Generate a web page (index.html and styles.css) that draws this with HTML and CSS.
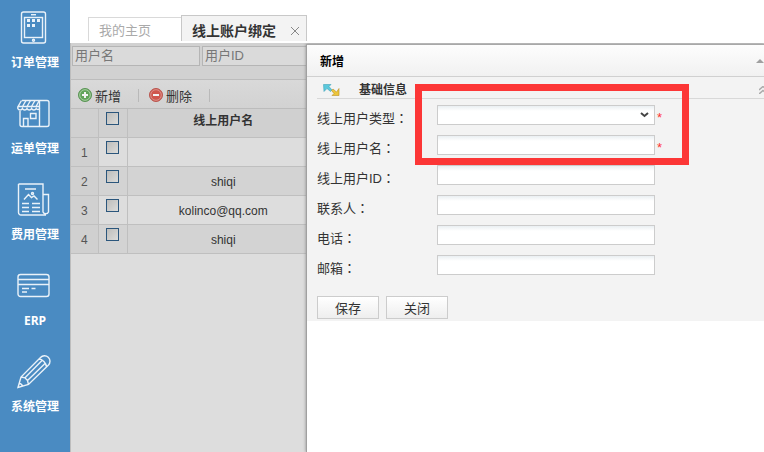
FILE: index.html
```
<!DOCTYPE html>
<html lang="zh-CN">
<head>
    <meta charset="UTF-8">
    <meta name="viewport" content="width=device-width, initial-scale=1.0">
    <title>线上账户绑定</title>
    <link rel="stylesheet" href="styles.css">
</head>
<body>
    <nav class="sidebar">
        <a class="nav-item" href="#">
            <svg viewBox="0 0 36 36" width="36" height="36">
                <rect x="4.5" y="2" width="24" height="31" rx="2"/>
                <rect x="7.5" y="7.5" width="18" height="20"/>
                <path d="M14 4.7h5"/>
                <circle cx="16.5" cy="30.3" r="1"/>
                <path class="solid" d="M10 9h3v3h-3zM15 9h3v3h-3zM20 9h3v3h-3zM10 14h3v3h-3zM15 14h3v3h-3z"/>
            </svg>
            <span>订单管理</span>
        </a>
        <a class="nav-item" href="#">
            <svg viewBox="0 0 36 36" width="36" height="36">
                <path d="M5 4.500h25a2 2 0 0 1 2 2v22a2 2 0 0 1-2 2H5a2 2 0 0 1-2-2V15M22.500 4.500v26"/>
                <path d="M4.500 4.500L.8 11v1.500a2.500 2.500 0 0 0 4.600 0a2.500 2.500 0 0 0 4.600 0a2.500 2.500 0 0 0 4.600 0a2.500 2.500 0 0 0 4.600 0a2 2 0 0 0 3.500 0M1 10.500h21M9 4.500l-3.500 6M13.500 4.500l-3.500 6M18 4.500l-3.500 6M22 5l-3 5.500"/>
                <path d="M6.500 30v-7.500h4.500v7.500M13.500 17.500h5.500v5h-5.500z"/>
            </svg>
            <span>运单管理</span>
        </a>
        <a class="nav-item" href="#">
            <svg viewBox="0 0 36 36" width="36" height="36">
                <path d="M1.500 2h24.500v28a3 3 0 0 0 5.500 0V12.500H26M29 33H4a2.500 2.500 0 0 1-2.500-2.500V2"/>
                <path d="M8 7h11M7 17.500l4.500-5 3 3 2.500-1.500 3.500 3.500M5 21.500h7M5 25.500h7M5 29.500h7M15 21.500h8M15 25.500h8M15 29.500h8"/>
                <circle cx="15.500" cy="11.500" r="1"/>
            </svg>
            <span>费用管理</span>
        </a>
        <a class="nav-item" href="#">
            <svg viewBox="0 0 36 36" width="36" height="36">
                <rect x="1" y="6.500" width="31" height="22" rx="2.500"/>
                <path d="M1 11.500h31M1 16.500h31M5 20.500h7M14.500 20.500h4M5 24h5"/>
            </svg>
            <span>ERP</span>
        </a>
        <a class="nav-item" href="#">
            <svg viewBox="0 0 36 36" width="36" height="36">
                <path d="M1 33.500L4 23 23.500 3.500a5.200 5.200 0 0 1 8 7.500L11.500 30.500zM4 23l4 .8 2.500 2.700 1 4M22 5c3 0 7.500 4 7.500 8M8 23.800L25 6.500M10.500 26.500L28 9.500M2.500 29.500c1.500 0 3 1.500 3 2.700"/>
            </svg>
            <span>系统管理</span>
        </a>
    </nav>

    <div class="main">
        <div class="tabs">
            <a class="tab" href="#">我的主页</a>
            <div class="tab active">
                <span>线上账户绑定</span>
                <button class="tab-close" type="button" aria-label="关闭标签">
                    <svg viewBox="0 0 10 10" width="10" height="10"><path d="M1 1l8 8M9 1L1 9"/></svg>
                </button>
            </div>
        </div>

        <div class="workspace">
            <form class="query">
                <input type="text" placeholder="用户名" aria-label="用户名">
                <input type="text" placeholder="用户ID" aria-label="用户ID">
            </form>

            <div class="toolbar">
                <button class="tool" type="button">
                    <svg viewBox="0 0 14 14" width="14" height="14">
                        <circle cx="7" cy="7" r="6.500" fill="#62a35a" stroke="#5a9455"/>
                        <circle cx="7" cy="7" r="5.300" fill="none" stroke="#a9cfa3"/>
                        <path d="M7 4v6M4 7h6" stroke="#f2f2f2" stroke-width="2"/>
                    </svg>
                    新增
                </button>
                <button class="tool" type="button">
                    <svg viewBox="0 0 14 14" width="14" height="14">
                        <circle cx="7" cy="7" r="6.500" fill="#cf574e" stroke="#b9564f"/>
                        <circle cx="7" cy="7" r="5.300" fill="none" stroke="#dc918a"/>
                        <path d="M4 7h6" stroke="#f2f2f2" stroke-width="2"/>
                    </svg>
                    删除
                </button>
            </div>

            <table class="grid">
                <thead>
                    <tr>
                        <th class="num"></th>
                        <th class="check"><input type="checkbox" aria-label="全选"></th>
                        <th>线上用户名</th>
                    </tr>
                </thead>
                <tbody>
                    <tr>
                        <td class="num">1</td>
                        <td class="check"><input type="checkbox" aria-label="选择第1行"></td>
                        <td></td>
                    </tr>
                    <tr>
                        <td class="num">2</td>
                        <td class="check"><input type="checkbox" aria-label="选择第2行"></td>
                        <td>shiqi</td>
                    </tr>
                    <tr>
                        <td class="num">3</td>
                        <td class="check"><input type="checkbox" aria-label="选择第3行"></td>
                        <td>kolinco@qq.com</td>
                    </tr>
                    <tr>
                        <td class="num">4</td>
                        <td class="check"><input type="checkbox" aria-label="选择第4行"></td>
                        <td>shiqi</td>
                    </tr>
                </tbody>
            </table>

            <!-- 新增面板，盖在列表上方 -->
            <section class="panel">
                <header class="panel-header">
                    <h2>新增</h2>
                    <button class="collapse" type="button" aria-label="收起">
                        <svg viewBox="0 0 8 4" width="8" height="4"><path d="M0 4L4 0l4 4z" fill="#a0a0a0"/></svg>
                    </button>
                </header>
                <form class="panel-form">
                    <div class="group-title">
                        <svg viewBox="0 0 17 12" width="17" height="12">
                            <path d="M.5.500h7.500L6 2.500l3 3.500-1.500 1.500L4 4.500 1 7.500z" fill="#5cc9dc" stroke="#3fa3b8" stroke-width=".6"/>
                            <path d="M16 11.500H9l2-2-2.500-3L10 5l3.500 3L16 4.500z" fill="#ecc53a" stroke="#b8912a" stroke-width=".6"/>
                        </svg>
                        <h3>基础信息</h3>
                        <button class="collapse" type="button" aria-label="收起基础信息">
                            <svg viewBox="0 0 5 8" width="5" height="8"><path d="M0 4l4-3.500 4 3.500M0 8l4-3.500L8 8" fill="none" stroke="#aaa" stroke-width="1.500"/></svg>
                        </button>
                    </div>
                    <div class="field">
                        <label for="userType">线上用户类型<span class="colon" lang="zh-TW">：</span></label>
                        <select id="userType" required></select>
                        <span class="required">*</span>
                    </div>
                    <div class="field">
                        <label for="userName">线上用户名<span class="colon" lang="zh-TW">：</span></label>
                        <input type="text" id="userName" required>
                        <span class="required">*</span>
                    </div>
                    <div class="field">
                        <label for="userId">线上用户ID<span class="colon" lang="zh-TW">：</span></label>
                        <input type="text" id="userId">
                    </div>
                    <div class="field">
                        <label for="contact">联系人<span class="colon" lang="zh-TW">：</span></label>
                        <input type="text" id="contact">
                    </div>
                    <div class="field">
                        <label for="phone">电话<span class="colon" lang="zh-TW">：</span></label>
                        <input type="text" id="phone">
                    </div>
                    <div class="field">
                        <label for="email">邮箱<span class="colon" lang="zh-TW">：</span></label>
                        <input type="text" id="email">
                    </div>
                    <div class="actions">
                        <button type="button">保存</button>
                        <button type="button">关闭</button>
                    </div>
                    <div class="highlight"></div>
                </form>
            </section>
        </div>
    </div>
</body>
</html>
```
FILE: styles.css
```
* {
    box-sizing: border-box;
}
body {
    display: flex;
    min-height: 100vh;
    margin: 0;
    background: #fff;
    color: #333;
    font-family: "Liberation Sans", "Noto Sans CJK SC", sans-serif;
    font-size: 13px;
}
button, input, select {
    margin: 0;
    font: inherit;
    color: inherit;
}
h2, h3 {
    margin: 0;
    font-size: 12px;
}

/* sidebar */
.sidebar {
    flex: 0 0 70px;
    background: #4a8bc2;
}
.nav-item {
    display: flex;
    flex-direction: column;
    align-items: center;
    gap: 8px;
    height: 86px;
    padding-top: 10px;
    color: #fff;
    font: bold 12px/18px "Open Sans", "Noto Sans CJK SC", sans-serif;
    text-decoration: none;
}
.nav-item svg {
    fill: none;
    stroke: #eaf2f9;
    stroke-width: 1.4;
}
.nav-item .solid {
    fill: #eaf2f9;
    stroke: none;
}

/* tabs */
.main {
    display: flex;
    flex: 1;
    flex-direction: column;
    min-width: 0;
}
.tabs {
    display: flex;
    align-items: flex-end;
    height: 43px;
    padding: 0 18px 2px;
}
.tab {
    width: 93px;
    height: 24px;
    padding-left: 10px;
    border: 1px solid #d9d9d9;
    border-width: 1px 0 0 1px;
    color: #aaa;
    line-height: 26px;
    text-decoration: none;
}
.tab.active {
    display: flex;
    align-items: center;
    justify-content: space-between;
    width: 126px;
    height: 26px;
    padding: 4px 6px 0 10px;
    border: 1px solid #c8c8c8;
    border-bottom: 0;
    background: #f3f3f3;
    color: #333;
    font-size: 14px;
    font-weight: bold;
    line-height: 20px;
}
.tab-close {
    display: flex;
    padding: 0;
    border: 0;
    background: none;
}
.tab-close svg {
    stroke: #888;
}

/* list */
.workspace {
    position: relative;
    flex: 1;
    overflow: hidden;
    border-left: 1px solid #bdbdbd;
    background: #ddd;
}
.query {
    display: flex;
    gap: 2px;
    height: 36px;
    padding: 3px 1px;
    background: #d1d1d1;
}
.query input {
    width: 128px;
    height: 20px;
    padding: 0 2px 2px;
    border: 1px solid #b5b5b5;
    background: #dadada;
}
.query input::placeholder {
    color: #777;
}
.toolbar {
    display: flex;
    align-items: center;
    height: 30px;
    padding-top: 2px;
    border-top: 1px solid #bcbcbc;
    border-bottom: 1px solid #bcbcbc;
    background: linear-gradient(#d9d9d9, #d2d2d2);
}
.tool {
    display: flex;
    align-items: center;
    gap: 3px;
    width: 68px;
    height: 13px;
    padding: 0 0 0 7px;
    border: 0;
    border-right: 1px solid #b9b9b9;
    background: none;
}
.tool + .tool {
    width: 71px;
    padding-left: 10px;
}
.grid {
    width: 249px;
    border-collapse: collapse;
    table-layout: fixed;
    font-size: 12px;
    text-align: center;
}
.grid th, .grid td {
    height: 29px;
    padding: 2px 0 0;
    border-right: 1px solid #bfbfbf;
    border-bottom: 1px solid #bfbfbf;
}
.grid th {
    height: 28px;
    padding: 0 0 6px;
    background: #d0d0d0;
}
.grid .num {
    width: 27px;
    background: #d0d0d0;
    color: #555;
}
.grid .check {
    width: 29px;
    padding: 3px 0 0;
    vertical-align: top;
}
.grid tbody tr:nth-child(even) {
    background: #d3d3d3;
}
.grid input {
    display: block;
    width: 13px;
    height: 13px;
    margin: 0 auto;
    border: 1px solid #2b567c;
    background: linear-gradient(135deg, #bdbdbb, #dcdcda);
    appearance: none;
}

/* panel */
.panel {
    position: absolute;
    top: 1px;
    right: 0;
    bottom: 0;
    left: 235px;
    border-top: 1px solid #a8a8a8;
    border-left: 1px solid #a0a0a0;
    background: #fff;
    box-shadow: 0 0 3px #888;
}
.panel-header {
    display: flex;
    align-items: center;
    justify-content: space-between;
    height: 32px;
    padding-left: 13px;
    border-bottom: 1px solid #d0d0d0;
    background: linear-gradient(#fdfdfd, #f1f1f1);
    color: #000;
}
.collapse {
    display: flex;
    margin-left: auto;
    padding: 0;
    border: 0;
    background: none;
}
.panel-form {
    position: relative;
    display: flex;
    flex-direction: column;
    gap: 10px;
    padding: 0 0 2px 10px;
    background: #f3f3f3;
}
.group-title {
    display: flex;
    align-items: center;
    height: 22px;
    margin-bottom: -4px;
    padding: 4px 0 0 6px;
    border-bottom: 1px solid #d8d8d8;
}
.group-title h3 {
    margin-left: 19px;
    line-height: 16px;
}
.field {
    display: flex;
    align-items: center;
    height: 20px;
}
.field label {
    width: 120px;
    padding-top: 4px;
}
.colon {
    font-family: "Noto Sans CJK TC", sans-serif;
    line-height: 1;
}
.field input, .field select {
    width: 218px;
    height: 20px;
    border: 1px solid #ccc;
    border-radius: 0;
    background: linear-gradient(#eaeff2, #fff 5px);
}
.field select {
    appearance: none;
    background: url("data:image/svg+xml,%3Csvg xmlns='http://www.w3.org/2000/svg' width='9' height='6'%3E%3Cpath d='M1 1l3.500 3L8 1' fill='none' stroke='%23444' stroke-width='2'/%3E%3C/svg%3E") no-repeat right 5px center, linear-gradient(#eaeff2, #fff 5px);
}
.required {
    margin-left: 2px;
    padding-top: 4px;
    color: #f33;
}
.actions {
    display: flex;
    gap: 7px;
    margin-top: 11px;
}
.actions button {
    width: 62px;
    height: 23px;
    padding: 0;
    border: 1px solid #ccc;
    background: linear-gradient(#fff, #eee);
}
.highlight {
    position: absolute;
    top: 7px;
    left: 108px;
    width: 274px;
    height: 81px;
    border: 7px solid #fc3636;
    pointer-events: none;
}
```
